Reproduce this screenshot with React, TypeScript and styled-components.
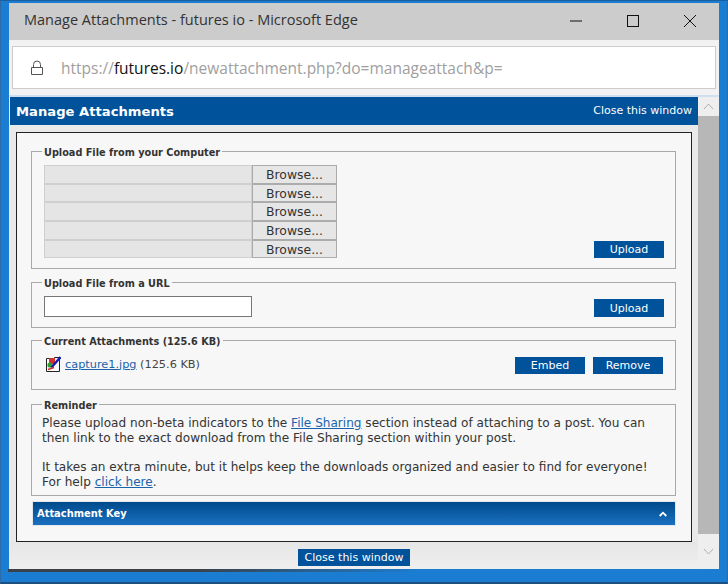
import React from "react";
import styled, { createGlobalStyle } from "styled-components";

const Global = createGlobalStyle`
  html, body { margin: 0; padding: 0; }
  body { width: 728px; height: 584px; overflow: hidden; background: #1b7dd1; }
`;

const Desktop = styled.div`
  box-sizing: border-box;
  width: 728px;
  height: 584px;
  display: flex;
  flex-direction: column;
  padding: 2px 8px 0;
  background: #1b7dd1;
  border-top: 1px solid #1c5f9e;
  border-bottom: 2px solid #1c4f80;
  border-left: 1px solid #2a6ba8;
  border-right: 1px solid #2a6ba8;
`;

const Win = styled.div`
  display: flex;
  flex-direction: column;
  height: 569px;
`;

const TitleBar = styled.div`
  height: 37px;
  flex: none;
  display: flex;
  align-items: center;
  background: #cccccc;
  padding-left: 15px;
  font: 14.5px "Open Sans", "Noto Sans", sans-serif;
  color: #333;
`;

const TitleText = styled.span`
  flex: 1;
  position: relative;
  top: -2px;
`;

const WinButton = styled.div`
  width: 57px;
  height: 37px;
  display: flex;
  align-items: center;
  justify-content: center;
  position: relative;
  top: -1px;
`;

const WinButtons = styled.div`
  display: flex;
  margin-right: 1px;
`;

const AddressBand = styled.div`
  flex: none;
  height: 57px;
  box-sizing: border-box;
  padding: 6px 3px 7px;
  background: #f2f2f2;
  border-bottom: 2px solid #cfdff0;
`;

const AddressBox = styled.div`
  box-sizing: border-box;
  height: 43px;
  background: #fff;
  border: 1px solid #cccccc;
  display: flex;
  align-items: center;
  padding-left: 18px;
  gap: 18px;
  font: 15.5px "Open Sans", "Noto Sans", sans-serif;
  color: #a0a0a0;
  white-space: nowrap;
`;

const Host = styled.span`
  color: #111;
`;

const Body = styled.div`
  flex: 1;
  display: flex;
  min-height: 0;
  background: #e9e9e9;
  padding-left: 1px;
`;

const Main = styled.div`
  width: 688px;
  display: flex;
  flex-direction: column;
`;

const HeaderBar = styled.div`
  flex: none;
  height: 28px;
  box-sizing: border-box;
  background: #00529b;
  color: #fff;
  display: flex;
  align-items: center;
  justify-content: space-between;
  padding: 0 6px;
`;

const HeaderTitle = styled.div`
  font: bold 13.15px "DejaVu Sans", Verdana, sans-serif;
`;

const HeaderLink = styled.a`
  font: 11px "DejaVu Sans", Verdana, sans-serif;
  position: relative;
  top: -1px;
`;

const Panel = styled.div`
  box-sizing: border-box;
  flex: none;
  height: 410px;
  margin: 7px 6px 0;
  padding: 11px 15px 0 14px;
  background: #f7f7f7;
  border: 1px solid #222;
  display: flex;
  flex-direction: column;
`;

const Group = styled.fieldset`
  box-sizing: border-box;
  margin: 0;
  border: 1px solid #a9a9a9;
  min-width: 0;
  flex: none;
  padding-left: 10px;
`;

const Legend = styled.legend`
  padding: 0 2px;
  position: relative;
  top: 2px;
  font: bold 10.8px/14px "DejaVu Sans Condensed", "DejaVu Sans", sans-serif;
  color: #333;
`;

const UploadGroup = styled(Group)`
  height: 125px;
  padding-top: 7px;
  padding-right: 11px;
  display: flex;
  justify-content: space-between;
  align-items: flex-end;
`;

const UrlGroup = styled(Group)`
  height: 53px;
  margin-top: 6px;
  padding-top: 7px;
  padding-right: 11px;
  display: flex;
  justify-content: space-between;
  align-items: flex-end;
`;

const AttachGroup = styled(Group)`
  height: 57px;
  margin-top: 5px;
  padding-top: 10px;
  padding-right: 12px;
  display: flex;
  justify-content: space-between;
  align-items: flex-start;
`;

const ReminderGroup = styled(Group)`
  height: 99px;
  margin-top: 7px;
  padding-top: 5px;
  padding-right: 10px;
  font: 12.08px/14.7px "DejaVu Sans", Verdana, sans-serif;
  color: #333;
`;

const FileRows = styled.div`
  display: flex;
  flex-direction: column;
  margin: 0 0 9.5px 2px;
`;

const FileRow = styled.div`
  display: flex;
  height: 18.7px;
`;

const FileField = styled.div`
  width: 208px;
  background: #e5e5e5;
  border: 1px solid #cfcfcf;
  box-sizing: border-box;
`;

const BrowseButton = styled.div`
  box-sizing: border-box;
  width: 85px;
  display: flex;
  align-items: center;
  justify-content: center;
  background: #e6e6e6;
  border: 1px solid #acacac;
  font: 12.4px "DejaVu Sans", Verdana, sans-serif;
  color: #333;
`;

const SolidButton = styled.button<{ $w?: number; $h?: number }>`
  box-sizing: border-box;
  width: ${(p) => p.$w ?? 70}px;
  height: ${(p) => p.$h ?? 17}px;
  padding: 0;
  border: 0;
  background: #00529b;
  color: #fff;
  font: 11px "DejaVu Sans", Verdana, sans-serif;
`;

const UploadSlot = styled.div`
  margin-bottom: 10px;
`;

const UrlInput = styled.div`
  box-sizing: border-box;
  width: 208px;
  height: 21px;
  background: #fff;
  border: 1px solid #777;
  margin: 0 0 10px 2px;
`;

const FileInfo = styled.div`
  display: flex;
  align-items: center;
  gap: 4px;
  margin: -1px 0 0 3px;
  font: 11.3px "DejaVu Sans", Verdana, sans-serif;
  color: #444;
`;

const Link = styled.a`
  color: #1a63ab;
  text-decoration: underline;
`;

const ActionRow = styled.div`
  display: flex;
  gap: 8px;
`;

const KeyBar = styled.div`
  box-sizing: border-box;
  flex: none;
  height: 25px;
  margin: 5px 0 0 1px;
  padding: 0 8px 0 4px;
  display: flex;
  align-items: center;
  justify-content: space-between;
  background: linear-gradient(#004a8c, #1a70c0);
  border: 1px solid #e2e8ee;
  color: #fff;
  font: bold 11px "DejaVu Sans Condensed", "DejaVu Sans", sans-serif;
`;

const Footer = styled.div`
  flex: 1;
  display: flex;
  justify-content: center;
  padding-top: 7px;
  background: linear-gradient(#e6e6e6, #efefef);
`;

const Scrollbar = styled.div`
  flex: 1;
  display: flex;
  flex-direction: column;
  background: #eeeeee;
`;

const ScrollCap = styled.div<{ $h: number }>`
  flex: none;
  height: ${(p) => p.$h}px;
  display: flex;
  align-items: center;
  justify-content: center;
`;

const ScrollThumb = styled.div`
  flex: 1;
  background: #b7b7b7;
`;

const TaskEdge = styled.div`
  flex: none;
  height: 3px;
  margin-left: -1px;
  background: linear-gradient(90deg, #3b4148 0, #3b4148 26%, #1b7dd1 58%, #1b7dd1 100%);
`;

const Minimize = () => (
  <svg width="14" height="14" viewBox="0 0 14 14"><path d="M1 7h12" stroke="#111" strokeWidth="1" /></svg>
);
const Maximize = () => (
  <svg width="14" height="14" viewBox="0 0 14 14"><rect x="1.5" y="1.5" width="11" height="11" fill="none" stroke="#111" /></svg>
);
const CloseIcon = () => (
  <svg width="14" height="14" viewBox="0 0 14 14"><path d="M1 1l12 12M13 1L1 13" stroke="#111" strokeWidth="1" /></svg>
);
const LockIcon = () => (
  <svg width="12" height="16" viewBox="0 0 12 16"><path d="M.5 7.5h11v7H.5zM2.5 7.5V4.5a3.5 3.5 0 0 1 7 0v3" fill="none" stroke="#555" /></svg>
);
const ScrollArrow = ({ up }: { up?: boolean }) => (
  <svg width="11" height="7" viewBox="0 0 11 7"><path d={up ? "M1 6l4.5-5L10 6" : "M1 1l4.5 5L10 1"} fill="none" stroke="#b0b0b0" /></svg>
);
const FileIcon = () => (
  <svg width="16" height="16" viewBox="0 0 16 16">
    <path d="M1.5 2.5h8v-1h5v14h-13z" fill="#fff" stroke="#222" />
    <rect x="4" y="2" width="6" height="6" fill="#d43030" />
    <circle cx="5" cy="9" r="2.6" fill="#2da02d" />
    <path d="M6.5 11.5L15.5 1" stroke="#1a1ab0" strokeWidth="2.4" />
    <path d="M3 13.5l6-2" stroke="#d43030" strokeWidth="1.4" />
  </svg>
);
const Chevron = () => (
  <svg width="8" height="6" viewBox="0 0 8 6"><path d="M.7 5L4 1.7 7.3 5" fill="none" stroke="#fff" strokeWidth="1.8" /></svg>
);

export default function App() {
  return (
    <>
      <Global />
      <Desktop>
        <Win>
          <TitleBar>
            <TitleText>Manage Attachments - futures io - Microsoft Edge</TitleText>
            <WinButtons>
              <WinButton><Minimize /></WinButton>
              <WinButton><Maximize /></WinButton>
              <WinButton><CloseIcon /></WinButton>
            </WinButtons>
          </TitleBar>
          <AddressBand>
            <AddressBox>
              <LockIcon />
              <span>https://<Host>futures.io</Host>/newattachment.php?do=manageattach&amp;p=</span>
            </AddressBox>
          </AddressBand>
          <Body>
            <Main>
              <HeaderBar>
                <HeaderTitle>Manage Attachments</HeaderTitle>
                <HeaderLink>Close this window</HeaderLink>
              </HeaderBar>
              <Panel>
                <UploadGroup>
                  <Legend>Upload File from your Computer</Legend>
                  <FileRows>
                    {[0, 1, 2, 3, 4].map((i) => (
                      <FileRow key={i}>
                        <FileField />
                        <BrowseButton>Browse...</BrowseButton>
                      </FileRow>
                    ))}
                  </FileRows>
                  <UploadSlot><SolidButton>Upload</SolidButton></UploadSlot>
                </UploadGroup>
                <UrlGroup>
                  <Legend>Upload File from a URL</Legend>
                  <UrlInput />
                  <UploadSlot><SolidButton $h={18}>Upload</SolidButton></UploadSlot>
                </UrlGroup>
                <AttachGroup>
                  <Legend>Current Attachments (125.6 KB)</Legend>
                  <FileInfo>
                    <FileIcon />
                    <span><Link>capture1.jpg</Link> (125.6 KB)</span>
                  </FileInfo>
                  <ActionRow>
                    <SolidButton>Embed</SolidButton>
                    <SolidButton>Remove</SolidButton>
                  </ActionRow>
                </AttachGroup>
                <ReminderGroup>
                  <Legend>Reminder</Legend>
                  Please upload non-beta indicators to the <Link>File Sharing</Link> section instead of attaching to a post. You can<br />
                  then link to the exact download from the File Sharing section within your post.<br />
                  <br />
                  It takes an extra minute, but it helps keep the downloads organized and easier to find for everyone!<br />
                  For help <Link>click here</Link>.
                </ReminderGroup>
                <KeyBar>
                  <span>Attachment Key</span>
                  <Chevron />
                </KeyBar>
              </Panel>
              <Footer>
                <SolidButton $w={112} $h={17}>Close this window</SolidButton>
              </Footer>
            </Main>
            <Scrollbar>
              <ScrollCap $h={19}><ScrollArrow up /></ScrollCap>
              <ScrollThumb />
              <ScrollCap $h={35}><ScrollArrow /></ScrollCap>
            </Scrollbar>
          </Body>
          <TaskEdge />
        </Win>
      </Desktop>
    </>
  );
}
